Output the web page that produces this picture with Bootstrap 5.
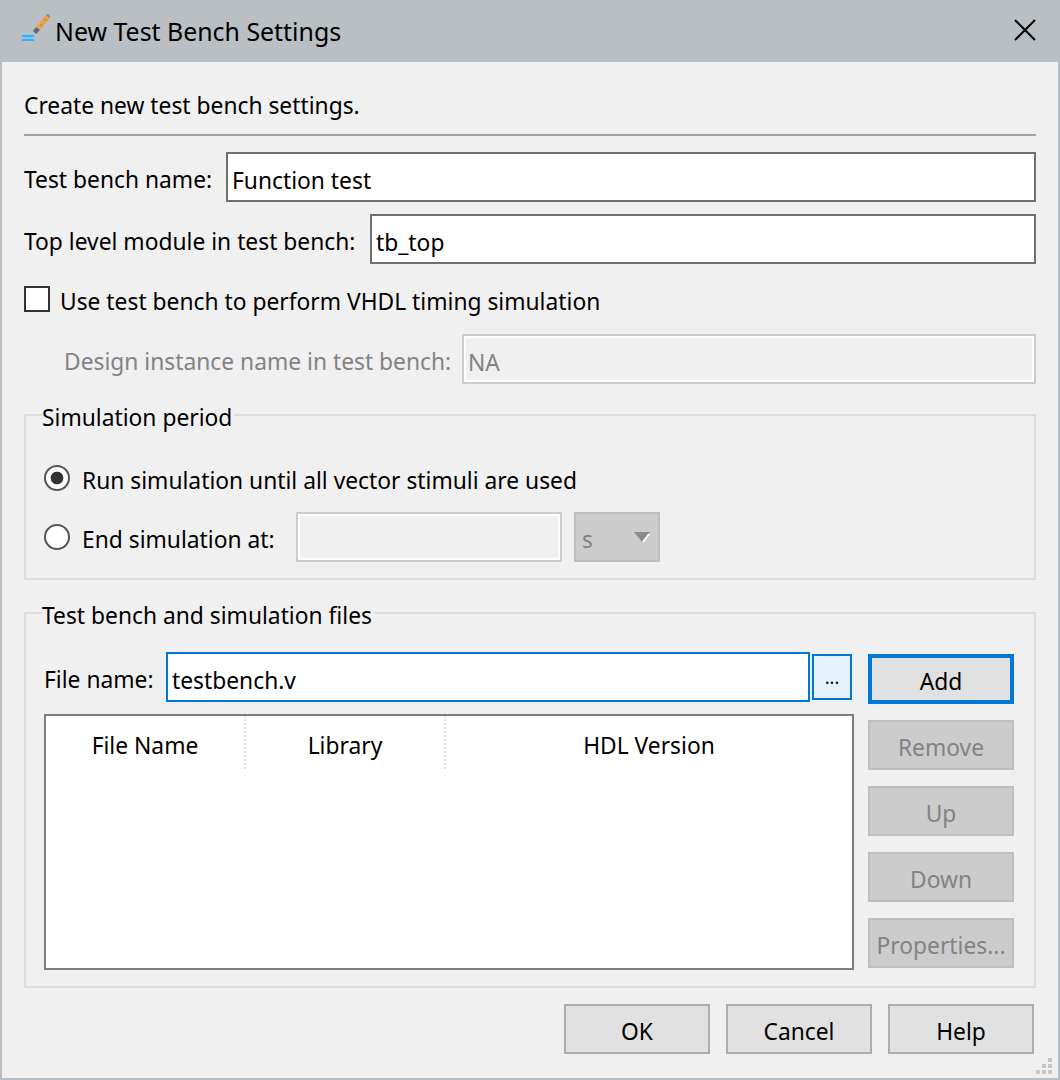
<!DOCTYPE html>
<html lang="en">

<head>
    <meta charset="UTF-8">
    <meta name="viewport" content="width=device-width, initial-scale=1.0">
    <title>New Test Bench Settings</title>
    <link href="https://cdn.jsdelivr.net/npm/bootstrap@5.3.3/dist/css/bootstrap.min.css" rel="stylesheet">
    <script src="https://cdn.jsdelivr.net/npm/bootstrap@5.3.3/dist/js/bootstrap.bundle.min.js"></script>

    <style>
        body {
            margin: 0;
            background-color: #f0f0f0;
            color: #000;
            font-family: "Noto Sans", "Open Sans", sans-serif;
            font-size: 22.8px;
            line-height: 30px;
        }

        .dlg-window {
            width: 1060px;
            height: 1080px;
            position: relative;
            border: solid #b9bfc4;
            border-width: 0 2px 2px 2px;
            background-color: #f0f0f0;
        }

        .dlg-title {
            height: 62px;
            margin: 0 -2px;
            padding: 0 22px;
            background-color: #b9bfc3;
            font-size: 24.9px;
        }

        .dlg-logo {
            margin: -6px 3px 0 0;
        }

        .dlg-close {
            margin: -2px 2px 0 auto;
        }

        .dlg-body {
            padding: 0 22px;
        }

        .dlg-intro {
            height: 74px;
            border-bottom: 2px solid #a0a0a0;
            padding-top: 29px;
        }

        .dlg-text {
            padding-top: 6px;
            white-space: nowrap;
            flex-shrink: 0;
        }

        .dlg-input.form-control {
            height: 50px;
            border: 2px solid #707070;
            border-radius: 0;
            padding: 6px 4px 0;
            background-color: #fff;
            color: #000;
            font-size: 22.8px;
            box-shadow: none;
        }

        .dlg-input.is-focus {
            border-color: #0078d7;
        }

        .dlg-input.form-control:disabled {
            border-color: #ccc;
            background-color: #f0f0f0;
            color: #838383;
            box-shadow: inset 0 0 0 2px #fff;
        }

        .dlg-check.form-check-input {
            width: 26px;
            height: 26px;
            margin: 0 10px 0 0;
            flex: none;
            border: 2px solid #333;
            border-radius: 0;
            background-color: #fff;
        }

        .dlg-radio.form-check-input {
            width: 26px;
            height: 26px;
            margin: 0 12px 0 0;
            flex: none;
            border: 2px solid #555;
            background-color: #fff;
        }

        .dlg-radio.form-check-input:checked {
            background-image: radial-gradient(circle, #333 6px, #fff 6.7px);
            background-size: auto;
            border-color: #555;
        }

        .dlg-muted {
            color: #838383;
        }

        .dlg-group {
            position: relative;
            border: 2px solid #dcdcdc;
        }

        .dlg-legend {
            position: absolute;
            top: -13px;
            left: 16px;
            padding: 0 2px 0 0;
            background-color: #f0f0f0;
        }

        .dlg-unit {
            width: 86px;
            height: 50px;
            margin-left: 12px;
            border: 2px solid #bebebe;
            background-color: #ccc;
            color: #838383;
            padding-left: 6px;
        }

        .dlg-caret {
            width: 16px;
            height: 10px;
            margin-right: 8px;
        }

        .dlg-btn.btn {
            width: 146px;
            height: 50px;
            padding: 6px 0 0;
            border: 2px solid #adadad;
            border-radius: 0;
            background-color: #e1e1e1;
            color: #000;
            font-size: 22.8px;
            line-height: 1;
        }

        .dlg-btn.btn.is-default {
            border: 4px solid #0078d7;
        }

        .dlg-btn.btn:disabled {
            border-color: #bfbfbf;
            background-color: #ccc;
            color: #838383;
            opacity: 1;
        }

        .dlg-browse.btn {
            width: 40px;
            height: 46px;
            margin-left: 2px;
            padding: 0;
            border: 2px solid #0078d7;
            border-radius: 0;
            background-color: #e5f1fb;
            color: #000;
            font-size: 18px;
        }

        .dlg-files {
            width: 810px;
            height: 256px;
            margin: 12px 0 0;
            border: 2px solid #7a7f85;
            background-color: #fff;
        }

        .dlg-head {
            height: 54px;
            padding-top: 8px;
            font-weight: 400;
            text-align: center;
            border-right: 2px dotted #e0e0e0;
        }

        .dlg-grip {
            position: absolute;
            right: 4px;
            bottom: 2px;
            width: 18px;
            height: 18px;
        }
    </style>
</head>

<body>

    <div class="dlg-window">
        <!-- Title bar -->
        <div class="dlg-title d-flex align-items-center">
            <svg width="30" height="28" viewBox="0 0 30 28" class="dlg-logo flex-shrink-0">
                <path d="M14 13 L24 1 L28 4 L18 16 Z" fill="#eda14f"/>
                <path d="M22 5 L25 7 M18 10 L21 12" stroke="#c97a2e" stroke-width="1"/>
                <path d="M24 1 L26 0 L28 2 L28 4 Z" fill="#a0825f"/>
                <path d="M14 13 L18 16 L14 20 L11 17 Z" fill="#63676b"/>
                <rect x="0" y="20" width="12" height="7" fill="#84c8f4"/>
                <rect x="0" y="21" width="12" height="2" fill="#3fa9ee"/>
                <rect x="0" y="25" width="12" height="2" fill="#3fa9ee"/>
            </svg>
            <span>New Test Bench Settings</span>
            <svg width="22" height="22" viewBox="0 0 22 22" class="dlg-close">
                <path d="M1 1 L21 21 M21 1 L1 21" stroke="#000" stroke-width="2"/>
            </svg>
        </div>

        <div class="dlg-body">
            <div class="dlg-intro">Create new test bench settings.</div>

            <!-- Names -->
            <div class="d-flex align-items-center mt-3">
                <label class="dlg-text" style="width: 202px">Test bench name:</label>
                <input class="form-control dlg-input flex-grow-1" value="Function test">
            </div>
            <div class="d-flex align-items-center" style="margin-top: 12px">
                <label class="dlg-text" style="width: 346px">Top level module in test bench:</label>
                <input class="form-control dlg-input flex-grow-1" value="tb_top">
            </div>

            <div class="d-flex align-items-center" style="margin-top: 22px; height: 26px">
                <input type="checkbox" class="form-check-input dlg-check">
                <span class="dlg-text">Use test bench to perform VHDL timing simulation</span>
            </div>

            <div class="d-flex align-items-center" style="margin-top: 22px">
                <label class="dlg-text dlg-muted" style="width: 438px; padding-left: 40px">Design instance name in test bench:</label>
                <input class="form-control dlg-input flex-grow-1" value="NA" disabled>
            </div>

            <!-- Simulation period -->
            <div class="dlg-group" style="margin-top: 30px; height: 166px; padding: 38px 0 0 18px">
                <div class="dlg-legend">Simulation period</div>
                <div class="d-flex align-items-center" style="height: 48px">
                    <input type="radio" name="period" class="form-check-input dlg-radio" checked>
                    <span class="dlg-text">Run simulation until all vector stimuli are used</span>
                </div>
                <div class="d-flex align-items-center" style="margin-top: 10px">
                    <input type="radio" name="period" class="form-check-input dlg-radio">
                    <span class="dlg-text" style="width: 214px">End simulation at:</span>
                    <input class="form-control dlg-input" style="width: 266px" disabled>
                    <div class="dlg-unit d-flex align-items-center justify-content-between">
                        <span class="dlg-text">s</span>
                        <svg class="dlg-caret" viewBox="0 0 16 10">
                            <path d="M0 0 H16 L8 10 Z" fill="#8a8a8a"/>
                            <path d="M15 2 L9 10" stroke="#fff" stroke-width="2"/>
                        </svg>
                    </div>
                </div>
            </div>

            <!-- Files -->
            <div class="dlg-group" style="margin-top: 32px; height: 376px; padding: 38px 0 0 18px">
                <div class="dlg-legend">Test bench and simulation files</div>
                <div class="d-flex">
                    <div>
                        <div class="d-flex align-items-center">
                            <label class="dlg-text" style="width: 122px">File name:</label>
                            <input class="form-control dlg-input is-focus" style="width: 644px" value="testbench.v">
                            <button type="button" class="btn dlg-browse">...</button>
                        </div>
                        <table class="dlg-files">
                            <thead>
                                <tr>
                                    <th class="dlg-head" style="width: 200px">File Name</th>
                                    <th class="dlg-head" style="width: 200px">Library</th>
                                    <th class="dlg-head">HDL Version</th>
                                </tr>
                            </thead>
                            <tbody>
                                <tr><td colspan="3"></td></tr>
                            </tbody>
                        </table>
                    </div>
                    <div class="d-flex flex-column gap-3" style="margin: 2px 0 0 14px">
                        <button type="button" class="btn dlg-btn is-default">Add</button>
                        <button type="button" class="btn dlg-btn" disabled>Remove</button>
                        <button type="button" class="btn dlg-btn" disabled>Up</button>
                        <button type="button" class="btn dlg-btn" disabled>Down</button>
                        <button type="button" class="btn dlg-btn" disabled>Properties...</button>
                    </div>
                </div>
            </div>

            <!-- Footer -->
            <div class="d-flex justify-content-end gap-3" style="margin-top: 16px; padding-right: 2px">
                <button type="button" class="btn dlg-btn">OK</button>
                <button type="button" class="btn dlg-btn">Cancel</button>
                <button type="button" class="btn dlg-btn">Help</button>
            </div>
        </div>

        <svg class="dlg-grip" viewBox="0 0 18 18">
            <path d="M12 0h4v4h-4z M6 6h4v4H6z M12 6h4v4h-4z M0 12h4v4H0z M6 12h4v4H6z M12 12h4v4h-4z" fill="#c4c4c4"/>
        </svg>
    </div>

</body>

</html>
